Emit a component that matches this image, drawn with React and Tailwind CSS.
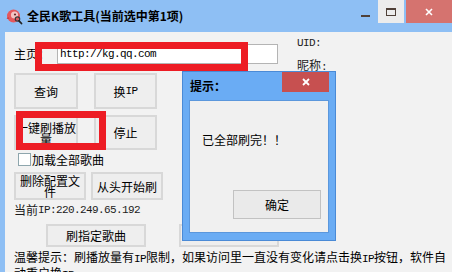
import React from "react";

const mono = "font-['Liberation_Mono',monospace] text-[11px] tracking-[-0.6px]";

function Btn({ className = "", children }) {
  return (
    <div
      className={`flex items-center justify-center border-2 border-[#d8d8d8] bg-[#eeeeee] text-[12px] leading-[11px] text-center text-black whitespace-nowrap ${className}`}
    >
      {children}
    </div>
  );
}

function AppIcon() {
  return (
    <svg width="17" height="17" viewBox="0 0 17 17">
      <circle cx="7.5" cy="8" r="6.5" fill="#e4575c" />
      <circle cx="8.5" cy="7" r="3.6" fill="#f3c4c4" />
      <circle cx="9" cy="6.5" r="1.1" fill="#6b2a2a" />
      <path d="M2 9 L0.5 11 L3.5 10.5 Z" fill="#c8343a" />
      <circle cx="11.5" cy="11" r="2.2" fill="none" stroke="#3a3a3a" strokeWidth="1.2" />
      <path d="M13 12.8 L15.5 15.5" stroke="#222" strokeWidth="1.8" strokeLinecap="round" />
    </svg>
  );
}

export default function App() {
  return (
    <div className="relative w-[452px] h-[272px] overflow-hidden bg-[#8ebff4] flex flex-col font-['Noto_Sans_CJK_SC',sans-serif] text-black">
      {/* title bar */}
      <div className="h-[32px] flex items-start shrink-0">
        <div className="h-[32px] flex items-center pl-[6px]">
          <AppIcon />
          <span className="ml-[4px] text-[12px] font-bold leading-[14px]">
            全民K歌工具(当前选中第1项)
          </span>
        </div>
        <div className="ml-auto flex items-start">
          <div className="w-[26px] h-[23px] flex justify-center pt-[15px]">
            <div className="w-[9px] h-[2px] bg-[#4f4038]" />
          </div>
          <div className="w-[26px] h-[23px] bg-[#ececec] flex items-center justify-center">
            <div className="w-[10px] h-[8px] border border-t-2 border-[#4f4038]" />
          </div>
          <div className="ml-[2px] w-[46px] h-[23px] bg-[#d5736f] flex items-center justify-center">
            <svg width="8" height="8" viewBox="0 0 8 8">
              <path d="M1 1 L7 7 M7 1 L1 7" stroke="#fff" strokeWidth="1.6" />
            </svg>
          </div>
        </div>
      </div>

      {/* client area */}
      <div className="flex-1 ml-[5px] bg-[#f2f2f2] pl-[9px] flex flex-col">
        <div className="flex">
          <div className="w-[283px] flex flex-col">
            <div className="mt-[12px] flex items-center h-[20px]">
              <span className="w-[43px] text-[12px] leading-[20px]">主页：</span>
              <div className="w-[221px] h-[20px] border border-[#b4b4b4] bg-white flex items-center pl-[2px]">
                <span className={`${mono} leading-[14px]`}>http://kg.qq.com</span>
              </div>
            </div>
            <div className="mt-[9px] flex gap-[16px]">
              <Btn className="w-[64px] h-[36px]">查询</Btn>
              <Btn className="w-[63px] h-[36px]">
                换<span className={mono}>IP</span>
              </Btn>
            </div>
            <div className="mt-[6px] flex gap-[16px]">
              <Btn className="w-[64px] h-[35px] leading-[10px]">
                <span>
                  一键刷播放
                  <br />量
                </span>
              </Btn>
              <Btn className="w-[63px] h-[35px] text-[#a3a3a3]">停止</Btn>
            </div>
            <div className="mt-[3px] h-[13px] flex items-center pl-[4px]">
              <div className="w-[13px] h-[13px] border border-[#8ea6ad] bg-white" />
              <span className="ml-[1px] text-[12px] leading-[13px]">加载全部歌曲</span>
            </div>
            <div className="mt-[6px] flex gap-[5px]">
              <Btn className="w-[72px] h-[28px]">
                <span>
                  删除配置文
                  <br />件
                </span>
              </Btn>
              <Btn className="w-[72px] h-[28px]">从头开始刷</Btn>
            </div>
            <div className="mt-[4px] h-[12px] flex items-center text-[12px] leading-[12px] text-[#1c1c1c]">
              当前<span className={mono}>IP:220.249.65.192</span>
            </div>
            <div className="mt-[8px] flex pl-[32px] gap-[33px]">
              <Btn className="w-[100px] h-[23px]">刷指定歌曲</Btn>
              <Btn className="w-[100px] h-[23px]"></Btn>
            </div>
          </div>
          <div className="flex flex-col pt-[5px]">
            <span className={`${mono} leading-[12px] text-[#222]`}>UID:</span>
            <span className="mt-[10px] text-[12px] leading-[12px] text-[#222]">
              昵称<span className={mono}>:</span>
            </span>
          </div>
        </div>
        <p className="mt-[3px] text-[12px] leading-[14px] whitespace-nowrap">
          温馨提示：刷播放量有<span className={mono}>IP</span>限制，如果访问里一直没有变化请点击换<span className={mono}>IP</span>按钮，软件自
          <br />
          动重启换<span className={mono}>IP</span>
        </p>
      </div>

      {/* red annotation rectangles */}
      <div className="absolute left-[35px] top-[42px] w-[213px] h-[29px] border-[7px] border-[#ed1c24]" />
      <div className="absolute left-[16px] top-[111px] w-[90px] h-[39px] border-[7px] border-[#ed1c24]" />

      {/* dialog */}
      <div className="absolute left-[182px] top-[71px] w-[154px] h-[170px] border border-[#4a8ad6] bg-[#6aacf4] flex flex-col">
        <div className="h-[28px] flex items-center shrink-0">
          <span className="pl-[7px] text-[12px] font-bold leading-[14px]">提示：</span>
          <div className="ml-auto mr-[6px] self-start w-[47px] h-[20px] bg-[#c75050] flex items-center justify-center">
            <svg width="8" height="8" viewBox="0 0 8 8">
              <path d="M1 1 L7 7 M7 1 L1 7" stroke="#fff" strokeWidth="1.8" />
            </svg>
          </div>
        </div>
        <div className="flex-1 mx-[6px] mb-[7px] bg-[#f0f0f0] border border-[#5b97dc] flex flex-col">
          <span className="pt-[32px] pl-[12px] text-[12px] leading-[14px]">已全部刷完！！</span>
          <div className="mt-auto self-end mr-[7px] mb-[13px] w-[88px] h-[29px] border border-[#c2c2c2] bg-[#eaeaea] flex items-center justify-center text-[12px]">
            确定
          </div>
        </div>
      </div>
    </div>
  );
}
